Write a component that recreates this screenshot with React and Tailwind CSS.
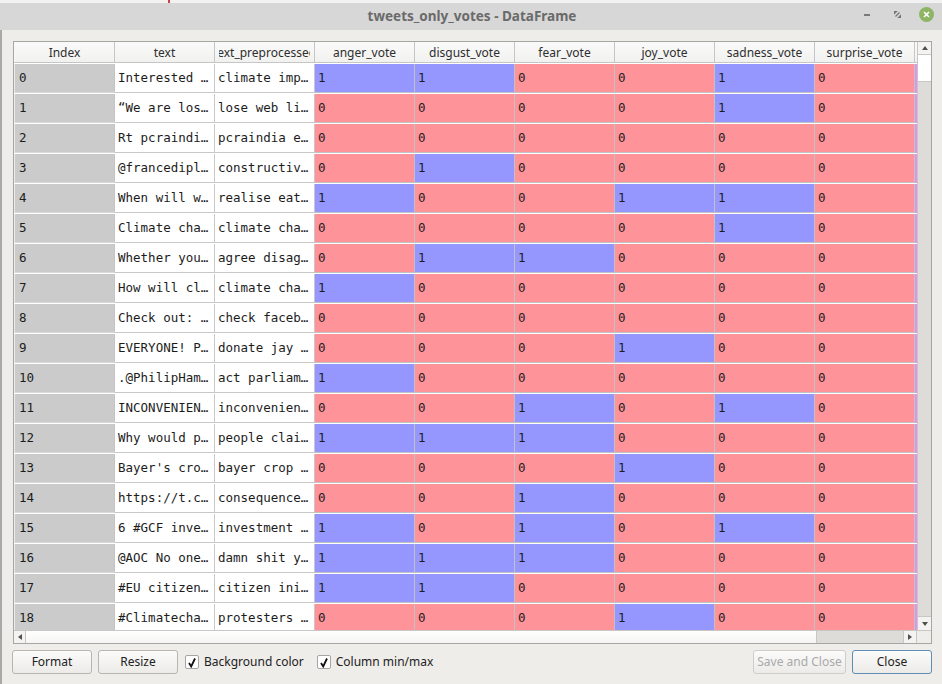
import React from "react";

const rows = [
  ["0", "Interested …", "climate imp…", [1, 1, 0, 0, 1, 0]],
  ["1", "“We are los…", "lose web li…", [0, 0, 0, 0, 1, 0]],
  ["2", "Rt pcraindi…", "pcraindia e…", [0, 0, 0, 0, 0, 0]],
  ["3", "@francedipl…", "constructiv…", [0, 1, 0, 0, 0, 0]],
  ["4", "When will w…", "realise eat…", [1, 0, 0, 1, 1, 0]],
  ["5", "Climate cha…", "climate cha…", [0, 0, 0, 0, 1, 0]],
  ["6", "Whether you…", "agree disag…", [0, 1, 1, 0, 0, 0]],
  ["7", "How will cl…", "climate cha…", [1, 0, 0, 0, 0, 0]],
  ["8", "Check out: …", "check faceb…", [0, 0, 0, 0, 0, 0]],
  ["9", "EVERYONE! P…", "donate jay …", [0, 0, 0, 1, 0, 0]],
  ["10", ".@PhilipHam…", "act parliam…", [1, 0, 0, 0, 0, 0]],
  ["11", "INCONVENIEN…", "inconvenien…", [0, 0, 1, 0, 1, 0]],
  ["12", "Why would p…", "people clai…", [1, 1, 1, 0, 0, 0]],
  ["13", "Bayer's cro…", "bayer crop …", [0, 0, 0, 1, 0, 0]],
  ["14", "https://t.c…", "consequence…", [0, 0, 1, 0, 0, 0]],
  ["15", "6 #GCF inve…", "investment …", [1, 0, 1, 0, 1, 0]],
  ["16", "@AOC No one…", "damn shit y…", [1, 1, 1, 0, 0, 0]],
  ["17", "#EU citizen…", "citizen ini…", [1, 1, 0, 0, 0, 0]],
  ["18", "#Climatecha…", "protesters …", [0, 0, 0, 1, 0, 0]],
];

const headers = ["text", "text_preprocessed", "anger_vote", "disgust_vote", "fear_vote", "joy_vote", "sadness_vote", "surprise_vote"];

const mono = { fontFamily: '"DejaVu Sans Mono", "Liberation Mono", monospace' };

function Tri({ dir }) {
  const pts = {
    up: "1,6 4,2 7,6",
    down: "1,2 4,6 7,2",
    left: "6,1 2,4 6,7",
    right: "2,1 6,4 2,7",
  }[dir];
  return (
    <svg width="8" height="8" viewBox="0 0 8 8">
      <polygon points={pts} fill="#505050" />
    </svg>
  );
}

function Check() {
  return (
    <div className="w-[14px] h-[14px] bg-white border border-[#a5a5a5] rounded-[2px] flex items-center justify-center">
      <svg width="10" height="11" viewBox="0 0 10 11">
        <path d="M2 6 L4.2 9.5 L8 1.5" stroke="#111" strokeWidth="1.8" fill="none" strokeLinejoin="miter" />
      </svg>
    </div>
  );
}

function Btn({ children, w, disabled, primary }) {
  return (
    <div
      className={`h-[24px] ${w} rounded-[3px] border flex items-center justify-center text-[12px] bg-gradient-to-b from-[#fbfbfa] to-[#ecebe8] ${
        disabled ? "border-[#cfcdca] text-[#a9a9a9]" : primary ? "border-[#5f8db5] text-[#222]" : "border-[#b8b6b2] text-[#222]"
      }`}
    >
      {children}
    </div>
  );
}

export default function App() {
  return (
    <div
      className="w-[942px] h-[684px] bg-[#efedea] flex flex-col overflow-hidden"
      style={{ fontFamily: '"Noto Sans", "DejaVu Sans", sans-serif' }}
    >
      {/* title bar */}
      <div className="h-[3px] bg-[#f2f2f2] flex">
        <div className="w-[168px]" />
        <div className="w-[2px] bg-[#d04040]" />
        <div className="flex-1" />
      </div>
      <div className="h-[27px] bg-[#d7d7d7] flex items-center relative">
        <div className="flex-1 text-center text-[13.5px] font-bold text-[#6a6a6a] pl-[2px] pb-[1px]">
          tweets_only_votes - DataFrame
        </div>
        <div className="absolute right-[8px] top-[4px] flex items-center gap-[18px]">
          <div className="w-[6px] h-[2px] bg-[#7a7a7a] mr-[6px]" />
          <svg width="7" height="7" viewBox="0 0 7 7">
            <path d="M0 3 V0 H3 Z M7 4 V7 H4 Z M1.5 5.5 L5.5 1.5" stroke="#777" strokeWidth="1.2" fill="#777" />
          </svg>
          <div className="w-[15px] h-[15px] rounded-full bg-[#8db564] flex items-center justify-center">
            <svg width="7" height="7" viewBox="0 0 7 7">
              <path d="M1 1 L6 6 M6 1 L1 6" stroke="#fff" strokeWidth="1.6" />
            </svg>
          </div>
        </div>
      </div>

      {/* body */}
      <div className="flex-1 flex">
        <div className="w-[2px] bg-[#a9a9a6]" />
        <div className="flex-1 flex flex-col pl-[11px] pr-[10px] pt-[11px]">
          {/* frame */}
          <div className="border border-[#a8a6a2] bg-white flex flex-col h-[603px]">
            <div className="flex h-[588px]">
              {/* viewport */}
              <div className="w-[903px] overflow-hidden flex flex-col">
                <div className="flex h-[21px] shrink-0 bg-gradient-to-b from-[#fafafa] to-[#f1f1f0] border-b border-[#c6c6c6] text-[12px] text-[#2e2e2e]">
                  <div className="w-[101px] shrink-0 border-l border-l-[#f8f8f8] border-r border-[#c6c6c6] flex items-center justify-center pt-[1px]">
                    Index
                  </div>
                  {headers.map((h) => (
                    <div key={h} className="w-[100px] shrink-0 border-r border-[#c6c6c6] flex px-[4px] pt-[1px]">
                      <div className="flex-1 flex items-center justify-center overflow-hidden whitespace-nowrap">
                        {h}
                      </div>
                    </div>
                  ))}
                  <div className="w-[2px] shrink-0" />
                </div>
                {rows.map(([idx, t, tp, votes]) => (
                  <div key={idx} className="flex h-[30px] shrink-0 text-[12.5px] text-[#1c1c1c] pt-[1px]" style={mono}>
                    <div className="w-[101px] shrink-0 bg-[#cbcbcb] border-l border-l-[#ededed] border-r border-r-[#c4c4c4] border-b border-b-[#dadada] flex items-center pl-[4px]">
                      {idx}
                    </div>
                    <div className="w-[100px] shrink-0 bg-white border-r border-b border-[#c8c8c8] flex items-center pl-[3px] whitespace-nowrap overflow-hidden">
                      {t}
                    </div>
                    <div className="w-[100px] shrink-0 bg-white border-r border-b border-[#c8c8c8] flex items-center pl-[3px] whitespace-nowrap overflow-hidden">
                      {tp}
                    </div>
                    {votes.map((v, i) => (
                      <div
                        key={i}
                        className={`w-[100px] shrink-0 border-r border-b border-[#bfc3c6] flex items-center pl-[3px] ${
                          v ? "bg-[#9697fe]" : "bg-[#ff939a]"
                        }`}
                      >
                        {v}
                      </div>
                    ))}
                    <div className="w-[2px] shrink-0 bg-[#dc94ee]" />
                  </div>
                ))}
              </div>
              {/* vertical scrollbar */}
              <div className="w-[14px] bg-[#dedcd9] border-l border-[#c9c7c4] flex flex-col">
                <div className="h-[13px] bg-[#f4f3f1] border-b border-[#c9c7c4] flex items-center justify-center">
                  <Tri dir="up" />
                </div>
                <div className="h-[27px] bg-white border-b border-[#c9c7c4]" />
                <div className="flex-1" />
                <div className="h-[14px] bg-[#f4f3f1] border-t border-[#c9c7c4] flex items-center justify-center">
                  <Tri dir="down" />
                </div>
              </div>
            </div>
            {/* horizontal scrollbar */}
            <div className="flex h-[13px] border-t border-[#c9c7c4] bg-[#dedcd9]">
              <div className="w-[12px] bg-[#f4f3f1] border-r border-[#c9c7c4] flex items-center justify-center">
                <Tri dir="left" />
              </div>
              <div className="w-[791px] bg-gradient-to-b from-white to-[#f6f5f3] border-r border-[#c9c7c4]" />
              <div className="flex-1" />
              <div className="w-[13px] bg-[#f4f3f1] border-l border-[#c9c7c4] flex items-center justify-center">
                <Tri dir="right" />
              </div>
              <div className="w-[15px] bg-[#efedea] border-l border-[#c9c7c4]" />
            </div>
          </div>

          {/* buttons */}
          <div className="flex items-center mt-[6px] text-[12px] text-[#222]">
            <div className="-ml-[1px]">
              <Btn w="w-[80px]">Format</Btn>
            </div>
            <div className="ml-[6px]">
              <Btn w="w-[80px]">Resize</Btn>
            </div>
            <div className="ml-[7px]">
              <Check />
            </div>
            <div className="ml-[5px]">Background color</div>
            <div className="ml-[13px]">
              <Check />
            </div>
            <div className="ml-[5px]">Column min/max</div>
            <div className="flex-1" />
            <Btn w="w-[93px]" disabled>
              Save and Close
            </Btn>
            <div className="ml-[6px]">
              <Btn w="w-[80px]" primary>
                Close
              </Btn>
            </div>
          </div>
        </div>
      </div>
    </div>
  );
}
